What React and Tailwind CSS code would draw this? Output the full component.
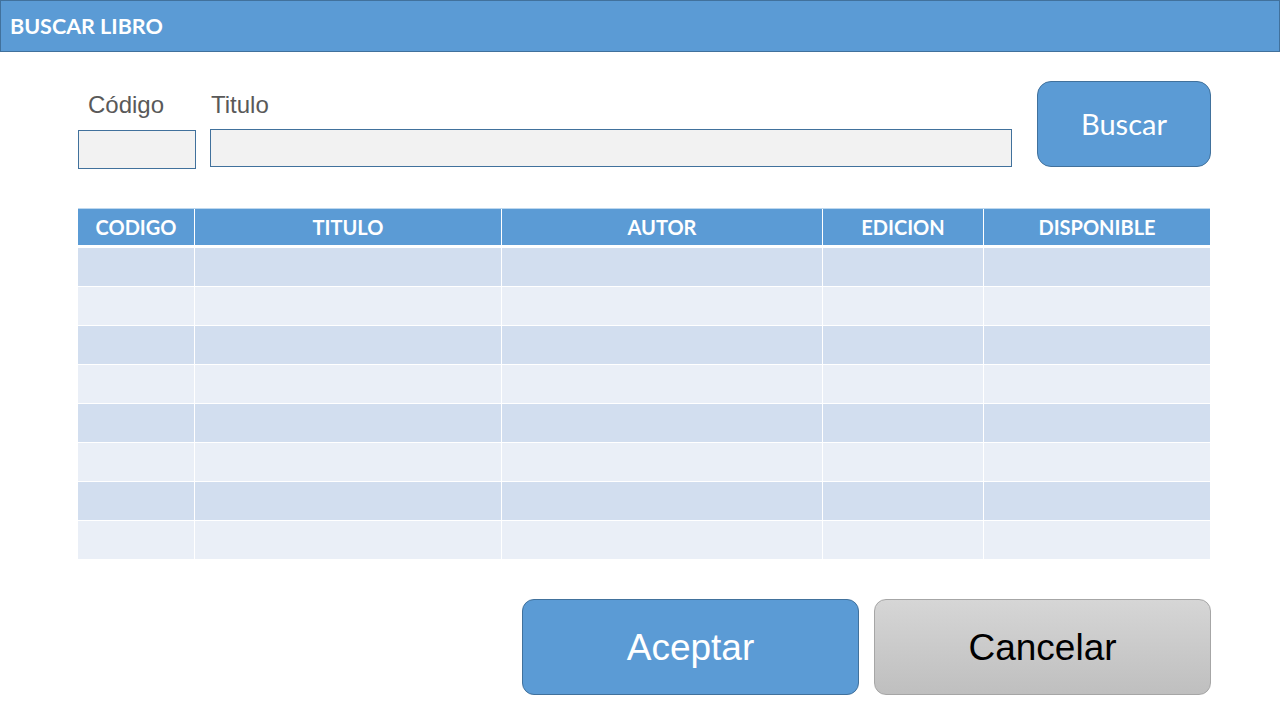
import React from 'react';

const columns = [
    { key: 'codigo', label: 'CODIGO' },
    { key: 'titulo', label: 'TITULO' },
    { key: 'autor', label: 'AUTOR' },
    { key: 'edicion', label: 'EDICION' },
    { key: 'disponible', label: 'DISPONIBLE' },
];

const rows = [0, 1, 2, 3, 4, 5, 6, 7];

const App = () => {
    return (
        <div className="w-[1280px] h-[720px] bg-white overflow-hidden font-['Liberation_Sans',sans-serif]">
            {/* barra de titulo */}
            <div className="h-[52px] bg-[#5b9bd5] border border-[#41719c] flex items-center pl-[9px]">
                <span className="font-['Lato',sans-serif] font-bold text-[21.5px] text-white">BUSCAR LIBRO</span>
            </div>

            {/* filtros */}
            <div className="flex pl-[78px] pt-[29px]">
                <div className="w-[118px] pt-[11px]">
                    <p className="pl-[10px] h-[26px] text-[24px] leading-[26px] text-[#595959]">Código</p>
                    <div className="mt-[12px] h-[39px] bg-[#f2f2f2] border border-[#41719c]"></div>
                </div>
                <div className="w-[802px] ml-[14px] pt-[11px]">
                    <p className="pl-[1px] h-[26px] text-[24px] leading-[26px] text-[#595959]">Titulo</p>
                    <div className="mt-[11px] h-[38px] bg-[#f2f2f2] border border-[#41719c]"></div>
                </div>
                <button className="ml-[25px] w-[174px] h-[86px] rounded-[14px] bg-[#5b9bd5] border border-[#41719c] text-white font-['Lato',sans-serif] text-[29px]">
                    Buscar
                </button>
            </div>

            {/* tabla de resultados */}
            <div className="ml-[78px] mt-[39px] w-[1132px] border-t border-[#bdd7ee]">
                <div className="grid grid-cols-[116px_306px_320px_160px_226px] gap-x-px bg-white">
                    {columns.map((col) => (
                        <div key={col.key} className="h-[36px] bg-[#5b9bd5] flex items-center justify-center font-['Lato',sans-serif] font-bold text-[20px] text-white">
                            {col.label}
                        </div>
                    ))}
                </div>
                <div className="mt-[3px] grid grid-cols-[116px_306px_320px_160px_226px] gap-px bg-white">
                    {rows.map((r) =>
                        columns.map((col) => (
                            <div key={r + col.key} className={`h-[38px] ${r % 2 === 0 ? 'bg-[#d2deef]' : 'bg-[#eaeff7]'}`}></div>
                        ))
                    )}
                </div>
            </div>

            {/* acciones */}
            <div className="flex justify-end gap-[15px] pr-[69px] mt-[40px]">
                <button className="w-[337px] h-[96px] rounded-[12px] bg-[#5b9bd5] border border-[#41719c] text-white text-[37px] pt-[2px]">
                    Aceptar
                </button>
                <button className="w-[337px] h-[96px] rounded-[12px] bg-gradient-to-b from-[#d6d6d6] to-[#bfbfbf] border border-[#a6a6a6] text-black text-[37px] pt-[2px]">
                    Cancelar
                </button>
            </div>
        </div>
    );
};

export default App;
